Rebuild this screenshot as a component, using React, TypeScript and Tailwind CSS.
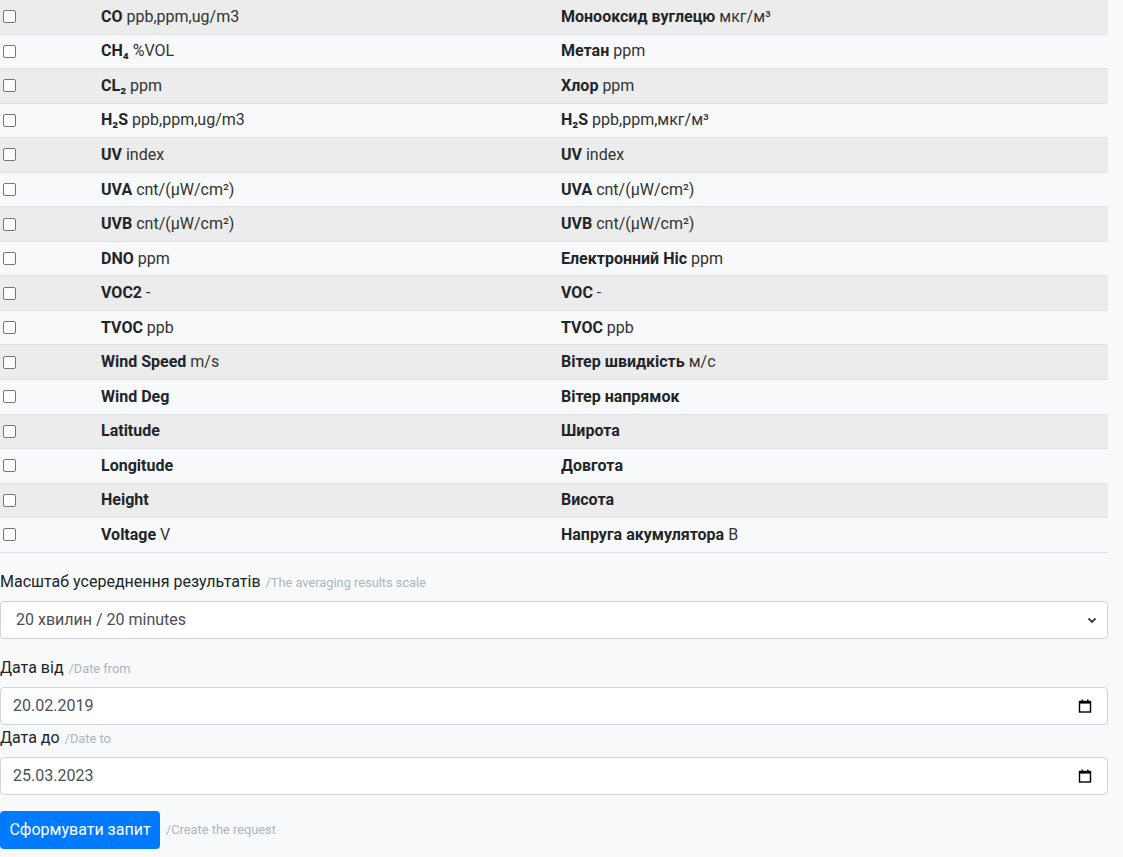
import React from 'react'

type Row = { l: string; lu?: string; r: string; ru?: string }

const rows: Row[] = [
  { l: 'CO', lu: 'ppb,ppm,ug/m3', r: 'Монооксид вуглецю', ru: 'мкг/м³' },
  { l: 'CH₄', lu: '%VOL', r: 'Метан', ru: 'ppm' },
  { l: 'CL₂', lu: 'ppm', r: 'Хлор', ru: 'ppm' },
  { l: 'H₂S', lu: 'ppb,ppm,ug/m3', r: 'H₂S', ru: 'ppb,ppm,мкг/м³' },
  { l: 'UV', lu: 'index', r: 'UV', ru: 'index' },
  { l: 'UVA', lu: 'cnt/(µW/cm²)', r: 'UVA', ru: 'cnt/(µW/cm²)' },
  { l: 'UVB', lu: 'cnt/(µW/cm²)', r: 'UVB', ru: 'cnt/(µW/cm²)' },
  { l: 'DNO', lu: 'ppm', r: 'Електронний Ніс', ru: 'ppm' },
  { l: 'VOC2', lu: '-', r: 'VOC', ru: '-' },
  { l: 'TVOC', lu: 'ppb', r: 'TVOC', ru: 'ppb' },
  { l: 'Wind Speed', lu: 'm/s', r: 'Вітер швидкість', ru: 'м/с' },
  { l: 'Wind Deg', r: 'Вітер напрямок' },
  { l: 'Latitude', r: 'Широта' },
  { l: 'Longitude', r: 'Довгота' },
  { l: 'Height', r: 'Висота' },
  { l: 'Voltage', lu: 'V', r: 'Напруга акумулятора', ru: 'В' },
]

function CalendarIcon() {
  return (
    <svg width="14" height="14" viewBox="0 0 14 14" className="text-black">
      <rect x="1.5" y="2.5" width="11" height="10.5" fill="none" stroke="currentColor" strokeWidth="1.4" />
      <rect x="1.5" y="2" width="11" height="2.6" fill="currentColor" />
      <rect x="3.5" y="0.5" width="1.4" height="2" fill="currentColor" />
      <rect x="9.1" y="0.5" width="1.4" height="2" fill="currentColor" />
    </svg>
  )
}

function Cell({ name, unit }: { name: string; unit?: string }) {
  return (
    <div className="whitespace-nowrap">
      <b className="font-bold">{name}</b>
      {unit && <span className="text-[#333]"> {unit}</span>}
    </div>
  )
}

function Label({ main, hint }: { main: string; hint: string }) {
  return (
    <div className="flex h-[24px] items-baseline gap-[5px] leading-[24px]">
      <span>{main}</span>
      <span className="text-[12.8px] text-[#adb5bd]">{hint}</span>
    </div>
  )
}

export default function App() {
  return (
    <div className="min-h-[857px] bg-[#f8f9fa] pr-[15px] text-[16px] leading-[24px] text-[#212529]" style={{ fontFamily: 'Roboto, "Noto Sans", sans-serif' }}>
      <div className="w-full">
        {rows.map((row, i) => (
          <div
            key={i}
            className={`grid h-[34.56px] grid-cols-[101px_460px_1fr] items-center border-b border-[#dee2e6] ${i % 2 === 0 ? 'bg-[#ececed]' : 'bg-[#f8f9fa]'}`}
          >
            <div className="flex items-center pl-[3px]">
              <input type="checkbox" className="h-[13px] w-[13px] appearance-none rounded-[2px] border border-[#767676] bg-white" />
            </div>
            <Cell name={row.l} unit={row.lu} />
            <Cell name={row.r} unit={row.ru} />
          </div>
        ))}
      </div>

      <div className="mt-[17px]">
        <Label main="Масштаб усереднення результатів" hint="/The averaging results scale" />
      </div>
      <div className="mt-[7px] flex h-[38px] items-center justify-between rounded-[4px] border border-[#ced4da] bg-white pl-[15px] pr-[10px] text-[#495057]">
        <span>20 хвилин / 20 minutes</span>
        <svg width="10" height="8" viewBox="0 0 10 8">
          <path d="M1.5 2.5 L5 6 L8.5 2.5" fill="none" stroke="#343a40" strokeWidth="1.8" />
        </svg>
      </div>

      <div className="mt-[17px]">
        <Label main="Дата від" hint="/Date from" />
      </div>
      <div className="mt-[7px] flex h-[38px] items-center justify-between rounded-[4px] border border-[#ced4da] bg-white pl-[12px] pr-[15px] text-[#495057]">
        <span>20.02.2019</span>
        <CalendarIcon />
      </div>

      <div className="mt-[1px]">
        <Label main="Дата до" hint="/Date to" />
      </div>
      <div className="mt-[7px] flex h-[38px] items-center justify-between rounded-[4px] border border-[#ced4da] bg-white pl-[12px] pr-[15px] text-[#495057]">
        <span>25.03.2023</span>
        <CalendarIcon />
      </div>

      <div className="mt-[16px] flex items-center gap-[6px]">
        <button className="h-[38px] w-[160px] rounded-[4px] bg-[#007bff] text-white">Сформувати запит</button>
        <span className="text-[12.8px] text-[#adb5bd]">/Create the request</span>
      </div>
    </div>
  )
}
